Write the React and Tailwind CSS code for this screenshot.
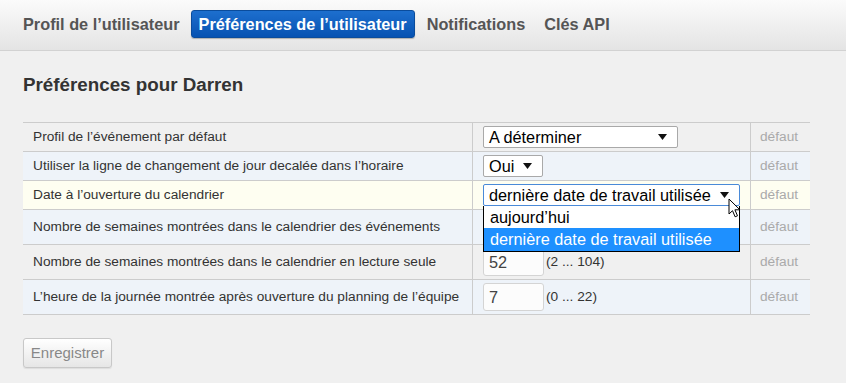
const rows = [
  { label: "Profil de l’événement par défaut", kind: "select", value: "A déterminer", w: "w-[195px]", bg: "bg-transparent", h: "h-[29px]" },
  { label: "Utiliser la ligne de changement de jour decalée dans l’horaire", kind: "select", value: "Oui", w: "w-[60px]", bg: "bg-[#eef3f9]", h: "h-[29px]" },
  { label: "Date à l’ouverture du calendrier", kind: "open", value: "dernière date de travail utilisée", w: "w-[257px]", bg: "bg-[#fefef1]", h: "h-[29px]" },
  { label: "Nombre de semaines montrées dans le calendrier des événements", kind: "input", value: "12", range: "(1 ... 52)", bg: "bg-[#eef3f9]", h: "h-[35px]" },
  { label: "Nombre de semaines montrées dans le calendrier en lecture seule", kind: "input", value: "52", range: "(2 ... 104)", bg: "bg-transparent", h: "h-[35px]" },
  { label: "L’heure de la journée montrée après ouverture du planning de l’équipe", kind: "input", value: "7", range: "(0 ... 22)", bg: "bg-[#eef3f9]", h: "h-[35px]" },
];

function Arrow() {
  return (
    <svg width="9" height="6" viewBox="0 0 9 6" className="shrink-0">
      <path d="M0 0h9L4.5 6z" fill="#111" />
    </svg>
  );
}

function FakeSelect({ value, w, focused }) {
  return (
    <div
      className={`${w} flex h-[22px] items-center justify-between rounded-[2px] border bg-white pl-[5px] pr-[10px] text-[16.3px] leading-none text-black ${
        focused ? "border-[#4a8ad8]" : "border-[#a9a9a9]"
      }`}
    >
      <span className="whitespace-nowrap">{value}</span>
      <Arrow />
    </div>
  );
}

function Cursor() {
  return (
    <svg
      width="14"
      height="21"
      viewBox="0 0 14 21"
      className="pointer-events-none absolute left-[245px] top-[14px]"
    >
      <path
        d="M1 1v15l3.5-3.3 2.6 6.1 2.4-1-2.6-6h5z"
        fill="#fff"
        stroke="#000"
        strokeWidth="1"
        strokeLinejoin="round"
      />
    </svg>
  );
}

export default function App() {
  return (
    <div className="min-h-[383px] bg-[#f0f0f0] font-['Liberation_Sans',Arial,sans-serif] text-[#333]">
      <div className="flex h-[51px] items-center gap-[3px] border-b border-[#d2d2d2] bg-gradient-to-b from-[#fbfbfb] to-[#e4e4e4] pl-[15px] pb-[2px]">
        <div className="px-2 text-[16.3px] font-bold text-[#555]">Profil de l’utilisateur</div>
        <div className="flex h-[28px] items-center rounded-[3px] border border-[#0a4c9c] bg-gradient-to-b from-[#1d6fce] to-[#0652b2] px-[7px] text-[16.3px] font-bold text-white shadow-[0_1px_1px_rgba(0,0,0,0.25)]">
          Préférences de l’utilisateur
        </div>
        <div className="px-2 pl-[9px] text-[16.3px] font-bold text-[#555]">Notifications</div>
        <div className="px-2 text-[16.3px] font-bold text-[#555]">Clés API</div>
      </div>

      <div className="px-[23px]">
        <h2 className="mt-[23px] text-[18.8px] font-bold leading-[22px] text-[#333]">
          Préférences pour Darren
        </h2>

        <div className="mt-[26px] w-[787px] border-t border-[#ccc]">
          {rows.map((r, i) => (
            <div
              key={i}
              className={`grid grid-cols-[449px_278px_60px] border-b border-[#ccc] ${r.bg} ${r.h}`}
            >
              <div className="flex items-center whitespace-nowrap pl-[10px] text-[13.7px] text-[#333]">{r.label}</div>
              <div className="flex items-center border-l border-[#ccc] pl-[10px]">
                {r.kind === "select" && <FakeSelect value={r.value} w={r.w} />}
                {r.kind === "open" && (
                  <div className="relative z-10">
                    <FakeSelect value={r.value} w={r.w} focused />
                    <div className="absolute left-0 top-full w-[257px] border border-t-0 border-black bg-white text-[16.3px] leading-none">
                      <div className="flex h-[22px] items-center pl-[6px] text-black">aujourd’hui</div>
                      <div className="flex h-[23px] items-center bg-[#1e90ff] pl-[6px] text-white">
                        dernière date de travail utilisée
                      </div>
                    </div>
                    <Cursor />
                  </div>
                )}
                {r.kind === "input" && (
                  <>
                    <div className="flex h-[28px] w-[61px] items-center rounded-[3px] border border-[#d4d4d4] bg-[#fcfcfc] pl-[5px] text-[16.3px] text-[#444]">
                      {r.value}
                    </div>
                    <span className="ml-[2px] text-[13.7px] text-[#333]">{r.range}</span>
                  </>
                )}
              </div>
              <div className="flex items-center border-l border-[#ccc] pl-[9px] text-[13.7px] text-[#aaa]">
                défaut
              </div>
            </div>
          ))}
        </div>

        <button className="mt-[23px] h-[30px] w-[89px] rounded-[3px] border border-[#c8c8c8] bg-gradient-to-b from-white to-[#e6e6e6] text-[15px] text-[#888] shadow-[0_1px_1px_rgba(0,0,0,0.08)]">
          Enregistrer
        </button>
      </div>
    </div>
  );
}
